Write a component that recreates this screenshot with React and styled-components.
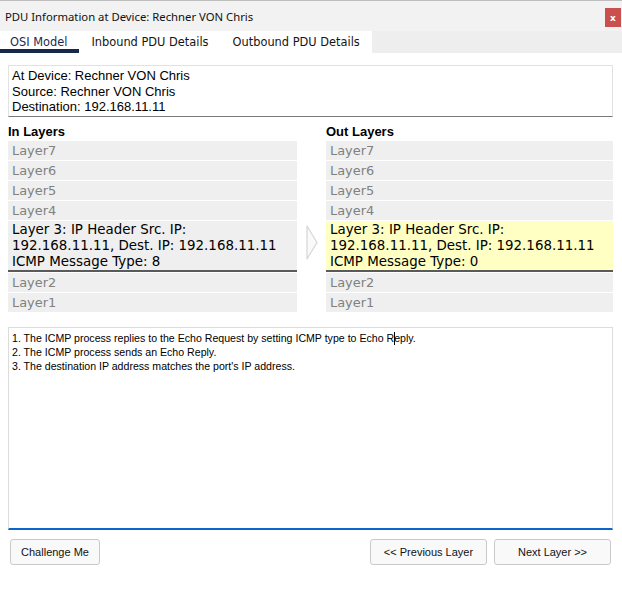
import styled, { createGlobalStyle } from "styled-components";

const GlobalStyle = createGlobalStyle`
  html, body {
    margin: 0;
    padding: 0;
    background: #ffffff;
  }
  * {
    box-sizing: border-box;
  }
`;

const upperLayers = ["Layer7", "Layer6", "Layer5", "Layer4"];
const lowerLayers = ["Layer2", "Layer1"];

function LayerColumn(props) {
  const { title, type, highlight } = props;
  return (
    <Column>
      <ColumnTitle>{title}</ColumnTitle>
      <LayerList>
        {upperLayers.map((l) => (
          <LayerRow key={l}>{l}</LayerRow>
        ))}
        <ActiveLayer $highlight={highlight}>
          Layer 3: IP Header Src. IP:
          <br />
          192.168.11.11, Dest. IP: 192.168.11.11
          <br />
          ICMP Message Type: {type}
        </ActiveLayer>
        {lowerLayers.map((l) => (
          <LayerRow key={l}>{l}</LayerRow>
        ))}
      </LayerList>
    </Column>
  );
}

export default function App() {
  return (
    <Window>
      <GlobalStyle />
      <TitleBar>
        <Title>PDU Information at Device: Rechner VON Chris</Title>
        <CloseButton>x</CloseButton>
      </TitleBar>
      <TabBar>
        <Tab $active>OSI Model</Tab>
        <Tab>Inbound PDU Details</Tab>
        <Tab>Outbound PDU Details</Tab>
      </TabBar>
      <Content>
        <InfoBox>
          <div>At Device: Rechner VON Chris</div>
          <div>Source: Rechner VON Chris</div>
          <div>Destination: 192.168.11.11</div>
        </InfoBox>
        <Layers>
          <LayerColumn title="In Layers" type="8" />
          <Arrow>
            <svg width="12" height="35" viewBox="0 0 12 35">
              <path
                d="M1 1 L11 17.5 L1 34 Z"
                fill="#fafafa"
                stroke="#d6d6d6"
                strokeWidth="1.2"
                strokeLinejoin="round"
              />
            </svg>
          </Arrow>
          <LayerColumn title="Out Layers" type="0" highlight />
        </Layers>
        <Explanation>
          <div>
            1. The ICMP process replies to the Echo Request by setting ICMP type to Echo R
            <Caret />
            eply.
          </div>
          <div>2. The ICMP process sends an Echo Reply.</div>
          <div>3. The destination IP address matches the port's IP address.</div>
        </Explanation>
        <ButtonRow>
          <Button>Challenge Me</Button>
          <Spacer />
          <Button $wide>&lt;&lt; Previous Layer</Button>
          <Button $wide>Next Layer &gt;&gt;</Button>
        </ButtonRow>
      </Content>
    </Window>
  );
}

const Window = styled.div`
  width: 622px;
  height: 592px;
  background: #ffffff;
  display: flex;
  flex-direction: column;
`;

const TitleBar = styled.div`
  height: 31px;
  border-top: 1px solid #bfbfbf;
  background: #f2f2f2;
  display: flex;
  align-items: center;
  justify-content: space-between;
  padding-left: 5px;
`;

const Title = styled.span`
  font-family: "Noto Sans", "Open Sans", sans-serif;
  font-size: 11.3px;
  color: #111111;
`;

const CloseButton = styled.div`
  width: 16px;
  height: 19px;
  margin-top: 3px;
  margin-right: 1px;
  background: #c9504f;
  color: #ffffff;
  font-family: "DejaVu Sans", sans-serif;
  font-weight: bold;
  font-size: 9px;
  display: flex;
  align-items: center;
  justify-content: center;
`;

const TabBar = styled.div`
  height: 22px;
  display: flex;
  background: linear-gradient(90deg, #ffffff 0 372px, #eeeeee 372px);
`;

const Tab = styled.div`
  padding: 4px 12px 0 ${(p) => (p.$active ? "10px" : "12px")};
  display: flex;
  align-items: center;
  font-family: "DejaVu Sans", Verdana, sans-serif;
  font-size: 11.4px;
  white-space: nowrap;
  color: ${(p) => (p.$active ? "#1b2a52" : "#141414")};
  border-bottom: 4px solid ${(p) => (p.$active ? "#14294b" : "transparent")};
`;

const Content = styled.div`
  flex: 1;
  display: flex;
  flex-direction: column;
  padding: 12px 9px 0 8px;
`;

const InfoBox = styled.div`
  height: 52px;
  border: 1px solid #e2e2e2;
  border-bottom: 1px solid #7a7a7a;
  padding: 2px 3px 0;
  font-family: "Liberation Sans", Arial, sans-serif;
  font-size: 13px;
  line-height: 15.5px;
  color: #000000;
`;

const Layers = styled.div`
  display: grid;
  grid-template-columns: 289px 29px 1fr;
`;

const Column = styled.div`
  display: flex;
  flex-direction: column;
`;

const ColumnTitle = styled.div`
  height: 24px;
  padding-top: 7px;
  font-family: "Liberation Sans", Arial, sans-serif;
  font-weight: bold;
  font-size: 13px;
  line-height: 15px;
  color: #000000;
`;

const LayerList = styled.div`
  display: flex;
  flex-direction: column;
  gap: 1px;
`;

const LayerRow = styled.div`
  height: 19px;
  padding-left: 4px;
  background: #efefef;
  font-family: "DejaVu Sans", Verdana, sans-serif;
  font-size: 12.9px;
  line-height: 19px;
  color: #818181;
`;

const ActiveLayer = styled.div`
  padding: 1px 4px 0;
  background: ${(p) => (p.$highlight ? "#ffffc4" : "#efefef")};
  border-bottom: 2px solid #5a5a5a;
  font-family: "DejaVu Sans", Verdana, sans-serif;
  font-size: 13.4px;
  line-height: 16px;
  white-space: nowrap;
  color: #000000;
`;

const Arrow = styled.div`
  display: flex;
  justify-content: center;
  align-items: flex-start;
  padding-top: 108px;
  padding-left: 1px;
`;

const Explanation = styled.div`
  margin-top: 15px;
  height: 203px;
  border: 1px solid #dcdcdc;
  border-bottom: 2px solid #0b66c9;
  padding: 3px 3px;
  font-family: "Liberation Sans", Arial, sans-serif;
  font-size: 10.6px;
  line-height: 14px;
  color: #000000;
`;

const Caret = styled.span`
  display: inline-block;
  width: 1px;
  height: 13px;
  margin-right: -1px;
  vertical-align: -3px;
  background: #000000;
`;

const ButtonRow = styled.div`
  display: flex;
  gap: 7px;
  margin-top: 9px;
  padding: 0 2px;
`;

const Spacer = styled.div`
  flex: 1;
`;

const Button = styled.button`
  width: ${(p) => (p.$wide ? "117px" : "90px")};
  height: 26px;
  border: 1px solid #c9c9c9;
  border-radius: 3px;
  background: #f9f9f9;
  font-family: "Liberation Sans", Arial, sans-serif;
  font-size: 11px;
  color: #111111;
  padding: 0;
`;
